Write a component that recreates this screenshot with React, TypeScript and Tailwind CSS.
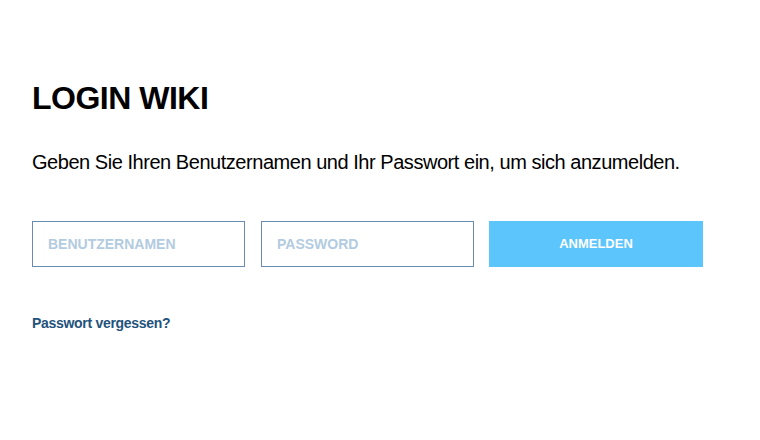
import { useState } from 'react';

export default function App() {
    const [user, setUser] = useState('');
    const [pass, setPass] = useState('');

    return (
        <div className="min-h-screen w-full bg-white px-8 pt-[78px] text-black" style={{ fontFamily: '"Liberation Sans", Arial, sans-serif' }}>
            <h1 className="text-[32px] font-bold leading-[40px] tracking-[-0.5px]">LOGIN WIKI</h1>

            <p className="mt-[30px] text-[20px] leading-[28px] tracking-[-0.46px] whitespace-nowrap">
                Geben Sie Ihren Benutzernamen und Ihr Passwort ein, um sich anzumelden.
            </p>

            <form className="mt-[45px] flex gap-4" onSubmit={(e) => e.preventDefault()}>
                <input
                    value={user}
                    onChange={(e) => setUser(e.target.value)}
                    placeholder="BENUTZERNAMEN"
                    className="h-[46px] w-[213px] border border-[#6a8bb0] pl-[15px] pr-4 text-[14px] font-bold text-[#1f4e79] outline-none placeholder:text-[#b3cbe0]"
                />
                <input
                    type="password"
                    value={pass}
                    onChange={(e) => setPass(e.target.value)}
                    placeholder="PASSWORD"
                    className="h-[46px] w-[213px] border border-[#6a8bb0] pl-[15px] pr-4 text-[14px] font-bold text-[#1f4e79] outline-none placeholder:text-[#b3cbe0]"
                />
                <button
                    type="submit"
                    className="-ml-px h-[46px] w-[214px] bg-[#5bc5fc] text-[13px] font-bold text-white"
                >
                    ANMELDEN
                </button>
            </form>

            <a href="#" className="mt-[46px] inline-block text-[14px] font-bold tracking-[-0.3px] text-[#23527c]">
                Passwort vergessen?
            </a>
        </div>
    );
}
